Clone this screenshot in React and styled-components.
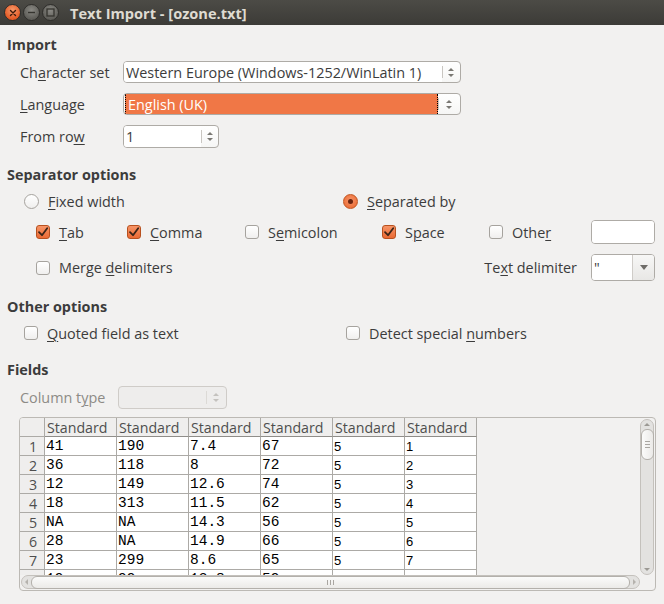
import React from 'react';
import styled, { createGlobalStyle, css } from 'styled-components';

const UI = '"Open Sans", "Noto Sans", "DejaVu Sans", sans-serif';
const MONO = '"Liberation Mono", "DejaVu Sans Mono", monospace';
const SANS2 = '"Liberation Sans", Arial, sans-serif';
const ORANGE = '#f07746';

const GlobalStyle = createGlobalStyle`
  html, body { margin: 0; padding: 0; background: #f2f1f0; }
  body { font-family: ${UI}; font-size: 14.4px; color: #3c3c3c; }
  * { box-sizing: border-box; }
`;

const Window = styled.div`
  width: 664px;
  height: 604px;
  display: flex;
  flex-direction: column;
  background: #f2f1f0;
  overflow: hidden;
`;

const TitleBar = styled.div`
  flex: none;
  height: 25px;
  display: flex;
  align-items: center;
  padding-left: 4px;
  gap: 2px;
  background: linear-gradient(#4c4b46, #3c3b37);
`;

const WinButton = styled.div`
  width: 17px;
  height: 17px;
  border-radius: 50%;
  display: flex;
  align-items: center;
  justify-content: center;
  border: 1px solid #2f2e2b;
  background: ${(p) =>
    p.$close
      ? 'radial-gradient(circle at 50% 35%, #f79a6c, #e45a25 70%)'
      : 'radial-gradient(circle at 50% 35%, #8a8984, #5f5e59 70%)'};
`;

const TitleText = styled.div`
  margin-left: 9px;
  font-weight: 700;
  font-size: 14.6px;
  color: #dfdbd2;
  white-space: nowrap;
`;

const Body = styled.div`
  flex: 1;
  display: flex;
  flex-direction: column;
  padding: 0 9px 0 7px;
`;

const Heading = styled.div`
  height: 20px;
  line-height: 20px;
  margin-top: ${(p) => p.$mt}px;
  font-weight: 700;
  color: #3c3c3c;
`;

const Row = styled.div`
  display: flex;
  align-items: center;
  height: ${(p) => p.$h}px;
  margin-top: ${(p) => p.$mt}px;
  padding-left: ${(p) => p.$indent || 0}px;
`;

const GridRow = styled.div`
  display: grid;
  align-items: center;
  grid-template-columns: ${(p) => p.$cols};
  height: ${(p) => p.$h}px;
  margin-top: ${(p) => p.$mt}px;
  padding-left: ${(p) => p.$indent || 0}px;
`;

const Label = styled.span`
  width: ${(p) => (p.$w ? `${p.$w}px` : 'auto')};
  flex: none;
  white-space: nowrap;
  color: ${(p) => (p.$disabled ? '#8d8b86' : '#3c3c3c')};
`;

const Mn = styled.span`
  text-decoration: underline;
  text-underline-offset: 2px;
  text-decoration-thickness: 1px;
`;

const Field = styled.div`
  display: flex;
  align-items: stretch;
  width: ${(p) => p.$w}px;
  height: ${(p) => p.$h}px;
  border: 1px solid ${(p) => (p.$disabled ? '#cfccc8' : '#aeaba6')};
  border-radius: 4px;
  background: ${(p) => (p.$disabled ? '#eeedec' : 'linear-gradient(#ffffff, #f6f6f5)')};
  overflow: hidden;
`;

const FieldText = styled.div`
  flex: 1;
  display: flex;
  align-items: center;
  padding-left: 2px;
  white-space: nowrap;
  color: #3c3c3c;
  background: ${(p) => (p.$clear ? 'transparent' : '#fff')};
`;

const Selected = styled.div`
  flex: 1;
  display: flex;
  align-items: center;
  padding-left: 2px;
  margin-left: 1px;
  color: #fff;
  background: ${ORANGE};
  border-left: 1px dotted #000;
  border-right: 1px dotted #000;
`;

const Spin = styled.div`
  flex: none;
  width: ${(p) => p.$w}px;
  display: flex;
  flex-direction: column;
  align-items: center;
  justify-content: center;
  gap: 3px;
  position: relative;
  &::before {
    content: '';
    position: absolute;
    left: 0;
    top: 4px;
    bottom: 4px;
    border-left: 1px solid ${(p) => (p.$disabled ? '#dcdad6' : '#c9c6c1')};
  }
`;

const Tri = styled.span`
  width: 0;
  height: 0;
  border-left: 3px solid transparent;
  border-right: 3px solid transparent;
  ${(p) =>
    p.$up
      ? css`border-bottom: 3px solid ${p.$c || '#7a7873'};`
      : css`border-top: 3px solid ${p.$c || '#7a7873'};`}
`;

const DropBtn = styled.div`
  flex: none;
  width: 22px;
  display: flex;
  align-items: center;
  justify-content: center;
  border-left: 1px solid #cfccc8;
  background: linear-gradient(#f7f7f6, #e8e7e5);
`;

const DropTri = styled.span`
  width: 0;
  height: 0;
  border-left: 4px solid transparent;
  border-right: 4px solid transparent;
  border-top: 5px solid #6e6c68;
`;

const Option = styled.label`
  display: flex;
  align-items: center;
  gap: 9px;
  white-space: nowrap;
  color: #3c3c3c;
`;

const Box = styled.span`
  flex: none;
  width: 14px;
  height: 14px;
  border-radius: 3px;
  display: flex;
  align-items: center;
  justify-content: center;
  ${(p) =>
    p.$on
      ? css`
          border: 1px solid #b8511f;
          background: linear-gradient(#f79467, #ea6a34);
        `
      : css`
          border: 1px solid #a6a39e;
          background: linear-gradient(#ffffff, #f0efee);
        `}
`;

const Radio = styled.span`
  flex: none;
  width: 15px;
  height: 15px;
  border-radius: 50%;
  display: flex;
  align-items: center;
  justify-content: center;
  ${(p) =>
    p.$on
      ? css`
          border: 1px solid #c1541f;
          background: radial-gradient(circle at 50% 40%, #f79467, #e8642c);
          &::after {
            content: '';
            width: 5px;
            height: 5px;
            border-radius: 50%;
            background: #6a2410;
          }
        `
      : css`
          border: 1px solid #a6a39e;
          background: linear-gradient(#ffffff, #f0efee);
        `}
`;

const RightGroup = styled.div`
  margin-left: auto;
  display: flex;
  align-items: center;
  gap: 14px;
`;

/* ---- table ---- */
const TableFrame = styled.div`
  margin-top: 8px;
  margin-left: 12px;
  width: 637px;
  height: 174px;
  border: 1px solid #bcb9b4;
  border-radius: 4px;
  display: grid;
  grid-template-columns: 1fr 15px;
  grid-template-rows: 1fr 15px;
  overflow: hidden;
  background: #f2f1f0;
`;

const Viewport = styled.div`
  overflow: hidden;
`;

const Grid = styled.div`
  display: grid;
  grid-template-columns: 25px repeat(6, 72px);
  grid-auto-rows: 19px;
  width: max-content;
`;

const Cell = styled.div`
  border-right: 1px solid #acaaa6;
  border-bottom: 1px solid #acaaa6;
  white-space: nowrap;
  overflow: hidden;
  display: flex;
  align-items: center;
  ${(p) =>
    p.$head
      ? css`
          background: #efeeed;
          color: #4e4e4e;
          font-family: ${UI};
          font-size: 14.2px;
          padding-left: 2px;
          justify-content: ${p.$center ? 'center' : 'flex-start'};
          border-bottom-color: ${p.$rowHead ? '#acaaa6' : '#8f8d89'};
        `
      : css`
          background: #fff;
          color: #000;
          font-family: ${p.$sans ? SANS2 : MONO};
          font-size: ${p.$sans ? '13px' : '14.5px'};
          padding-left: 1px;
        `}
`;

const VScroll = styled.div`
  margin: 1px 1px 0 0;
  border: 1px solid #c4c1bc;
  border-radius: 7px;
  background: #e3e2e0;
  display: flex;
  flex-direction: column;
  align-items: center;
  padding: 3px 0;
`;

const HScroll = styled.div`
  margin: 0 0 1px 1px;
  border: 1px solid #c4c1bc;
  border-radius: 7px;
  background: #e3e2e0;
  display: flex;
  align-items: center;
  padding: 0 3px;
`;

const Thumb = styled.div`
  border: 1px solid #b3b0ab;
  border-radius: 6px;
  background: linear-gradient(${(p) => (p.$h ? '180deg' : '90deg')}, #fbfbfa, #ebeae8);
  display: flex;
  align-items: center;
  justify-content: center;
  ${(p) =>
    p.$h
      ? css`
          flex: 1;
          height: 13px;
          margin: 0 3px;
        `
      : css`
          width: 13px;
          height: 31px;
          margin: 3px 0 auto;
        `}
`;

const Grip = styled.span`
  display: block;
  ${(p) =>
    p.$h
      ? css`
          width: 7px;
          height: 5px;
          border-left: 1px solid #a9a6a1;
          border-right: 1px solid #a9a6a1;
          background: linear-gradient(90deg, transparent 2px, #a9a6a1 2px, #a9a6a1 3px, transparent 3px);
        `
      : css`
          width: 5px;
          height: 7px;
          border-top: 1px solid #a9a6a1;
          border-bottom: 1px solid #a9a6a1;
          background: linear-gradient(transparent 2px, #a9a6a1 2px, #a9a6a1 3px, transparent 3px);
        `}
`;

const ArrowV = styled.span`
  width: 0;
  height: 0;
  border-left: 3px solid transparent;
  border-right: 3px solid transparent;
  ${(p) => (p.$up ? css`border-bottom: 3px solid #9c9994;` : css`border-top: 3px solid #9c9994;`)}
`;

const ArrowH = styled.span`
  width: 0;
  height: 0;
  border-top: 3px solid transparent;
  border-bottom: 3px solid transparent;
  ${(p) => (p.$left ? css`border-right: 3px solid #b5b2ad;` : css`border-left: 3px solid #b5b2ad;`)}
`;

const Corner = styled.div``;

const rows = [
  ['41', '190', '7.4', '67', '5', '1'],
  ['36', '118', '8', '72', '5', '2'],
  ['12', '149', '12.6', '74', '5', '3'],
  ['18', '313', '11.5', '62', '5', '4'],
  ['NA', 'NA', '14.3', '56', '5', '5'],
  ['28', 'NA', '14.9', '66', '5', '6'],
  ['23', '299', '8.6', '65', '5', '7'],
  ['19', '99', '13.8', '59', '5', '8'],
];

function Check({ on, children }) {
  return (
    <Option>
      <Box $on={on}>
        {on && (
          <svg width="12" height="12" viewBox="0 0 12 12">
            <path d="M2 6.2 L5 9.2 L10.2 2.2" fill="none" stroke="#3a2418" strokeWidth="1.8" strokeLinecap="round" strokeLinejoin="round" />
          </svg>
        )}
      </Box>
      <span>{children}</span>
    </Option>
  );
}

function RadioOpt({ on, children }) {
  return (
    <Option>
      <Radio $on={on} />
      <span>{children}</span>
    </Option>
  );
}

function SpinArrows({ w, disabled }) {
  const c = disabled ? '#c4c2be' : '#7a7873';
  return (
    <Spin $w={w} $disabled={disabled}>
      <Tri $up $c={c} />
      <Tri $c={c} />
    </Spin>
  );
}

export default function App() {
  return (
    <Window>
      <GlobalStyle />
      <TitleBar>
        <WinButton $close>
          <svg width="8" height="8" viewBox="0 0 8 8">
            <path d="M1.5 1.5 L6.5 6.5 M6.5 1.5 L1.5 6.5" stroke="#3b1a0c" strokeWidth="1.4" strokeLinecap="round" />
          </svg>
        </WinButton>
        <WinButton>
          <svg width="9" height="9" viewBox="0 0 9 9">
            <path d="M1 4.5 H8" stroke="#35342f" strokeWidth="1.4" />
          </svg>
        </WinButton>
        <WinButton>
          <svg width="9" height="9" viewBox="0 0 9 9">
            <rect x="1" y="1" width="7" height="7" fill="none" stroke="#35342f" strokeWidth="1.3" />
          </svg>
        </WinButton>
        <TitleText>Text Import - [ozone.txt]</TitleText>
      </TitleBar>

      <Body>
        <Heading $mt={10}>Import</Heading>
        <Row $h={22} $mt={6} $indent={13}>
          <Label $w={103}>Ch<Mn>a</Mn>racter set</Label>
          <Field $w={338} $h={22}>
            <FieldText>Western Europe (Windows-1252/WinLatin 1)</FieldText>
            <SpinArrows w={18} />
          </Field>
        </Row>
        <Row $h={22} $mt={10} $indent={13}>
          <Label $w={103}><Mn>L</Mn>anguage</Label>
          <Field $w={338} $h={22}>
            <Selected>English (UK)</Selected>
            <SpinArrows w={22} />
          </Field>
        </Row>
        <Row $h={23} $mt={10} $indent={13}>
          <Label $w={103}>From ro<Mn>w</Mn></Label>
          <Field $w={96} $h={23}>
            <FieldText>1</FieldText>
            <SpinArrows w={17} />
          </Field>
        </Row>

        <Heading $mt={17}>Separator options</Heading>
        <GridRow $h={20} $mt={6} $indent={17} $cols="319px auto">
          <RadioOpt><Mn>F</Mn>ixed width</RadioOpt>
          <RadioOpt on><Mn>S</Mn>eparated by</RadioOpt>
        </GridRow>
        <GridRow $h={24} $mt={9} $indent={29} $cols="91px 118px 137px 107px 102px 64px">
          <Check on><Mn>T</Mn>ab</Check>
          <Check on><Mn>C</Mn>omma</Check>
          <Check>S<Mn>e</Mn>micolon</Check>
          <Check on>S<Mn>p</Mn>ace</Check>
          <Check>Othe<Mn>r</Mn></Check>
          <Field $w={64} $h={24}>
            <FieldText />
          </Field>
        </GridRow>
        <Row $h={27} $mt={10} $indent={29}>
          <Check>Merge <Mn>d</Mn>elimiters</Check>
          <RightGroup>
            <Label>Te<Mn>x</Mn>t delimiter</Label>
            <Field $w={64} $h={27}>
              <FieldText>"</FieldText>
              <DropBtn>
                <DropTri />
              </DropBtn>
            </Field>
          </RightGroup>
        </Row>

        <Heading $mt={16}>Other options</Heading>
        <GridRow $h={20} $mt={6} $indent={17} $cols="322px auto">
          <Check><Mn>Q</Mn>uoted field as text</Check>
          <Check>Detect special <Mn>n</Mn>umbers</Check>
        </GridRow>

        <Heading $mt={17}>Fields</Heading>
        <Row $h={23} $mt={6} $indent={13}>
          <Label $w={98} $disabled>Column t<Mn>y</Mn>pe</Label>
          <Field $w={109} $h={23} $disabled>
            <FieldText $clear />
            <SpinArrows w={20} disabled />
          </Field>
        </Row>

        <TableFrame>
          <Viewport>
            <Grid>
              <Cell $head $rowHead />
              {Array.from({ length: 6 }).map((_, i) => (
                <Cell $head key={`h${i}`}>Standard</Cell>
              ))}
              {rows.map((r, ri) => (
                <React.Fragment key={ri}>
                  <Cell $head $rowHead $center>{ri + 1}</Cell>
                  {r.map((v, ci) => (
                    <Cell key={ci} $sans={ci >= 4}>{v}</Cell>
                  ))}
                </React.Fragment>
              ))}
            </Grid>
          </Viewport>
          <VScroll>
            <ArrowV $up />
            <Thumb>
              <Grip />
            </Thumb>
            <ArrowV />
          </VScroll>
          <HScroll>
            <ArrowH $left />
            <Thumb $h>
              <Grip $h />
            </Thumb>
            <ArrowH />
          </HScroll>
          <Corner />
        </TableFrame>
      </Body>
    </Window>
  );
}
